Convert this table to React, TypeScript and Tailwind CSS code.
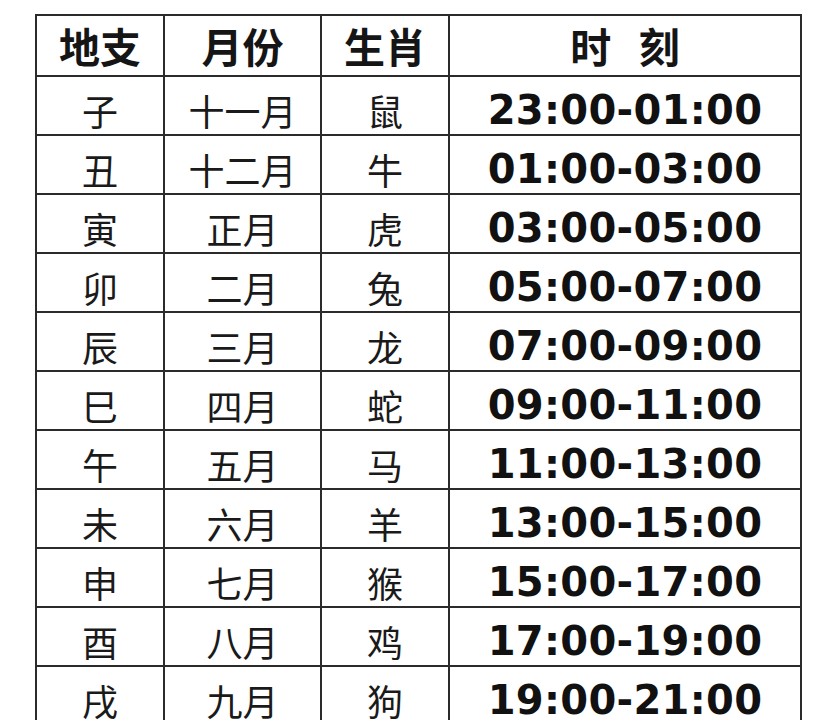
import React from "react";

const rows: [string, string, string, string][] = [
  ["子", "十一月", "鼠", "23:00-01:00"],
  ["丑", "十二月", "牛", "01:00-03:00"],
  ["寅", "正月", "虎", "03:00-05:00"],
  ["卯", "二月", "兔", "05:00-07:00"],
  ["辰", "三月", "龙", "07:00-09:00"],
  ["巳", "四月", "蛇", "09:00-11:00"],
  ["午", "五月", "马", "11:00-13:00"],
  ["未", "六月", "羊", "13:00-15:00"],
  ["申", "七月", "猴", "15:00-17:00"],
  ["酉", "八月", "鸡", "17:00-19:00"],
  ["戌", "九月", "狗", "19:00-21:00"],
];

const cjk = "font-['Noto_Sans_CJK_SC',sans-serif]";
const cell = "flex items-center justify-center border-r-2 border-b-2 border-[#2b2b2b]";

export default function App() {
  return (
    <div className="w-[836px] h-[720px] overflow-hidden bg-white">
      <div className="ml-[35px] mt-[14px] w-[767px] grid grid-cols-[128px_157px_128px_352px] border-l-2 border-t-2 border-[#2b2b2b]">
        <div className={`${cell} h-[61px] ${cjk} font-bold text-[41px] text-[#151515]`}>地支</div>
        <div className={`${cell} h-[61px] ${cjk} font-bold text-[41px] text-[#151515]`}>月份</div>
        <div className={`${cell} h-[61px] ${cjk} font-bold text-[41px] text-[#151515]`}>生肖</div>
        <div className={`${cell} h-[61px] ${cjk} font-bold text-[41px] text-[#151515] [word-spacing:18px]`}>时 刻</div>
        {rows.map((r, i) => (
          <React.Fragment key={i}>
            <div className={`${cell} h-[59px] ${cjk} text-[36px] text-[#1a1a1a] pt-[8px]`}>{r[0]}</div>
            <div className={`${cell} h-[59px] ${cjk} text-[36px] text-[#1a1a1a] pt-[8px]`}>{r[1]}</div>
            <div className={`${cell} h-[59px] ${cjk} text-[36px] text-[#1a1a1a] pt-[8px]`}>{r[2]}</div>
            <div className={`${cell} h-[59px] font-['DejaVu_Sans',sans-serif] font-bold text-[40px] tracking-[0.3px] text-[#111] pt-[9px]`}>{r[3]}</div>
          </React.Fragment>
        ))}
      </div>
    </div>
  );
}
